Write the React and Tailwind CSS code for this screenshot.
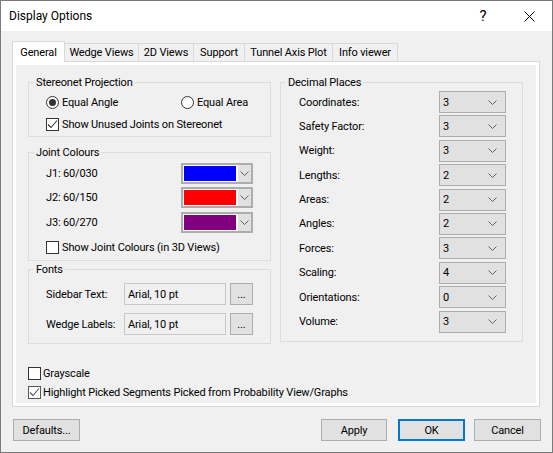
import React from 'react';

function Chevron() {
  return (
    <svg width="9" height="5" viewBox="0 0 9 5" className="block">
      <path d="M0.5 0.5 L4.5 4.5 L8.5 0.5" fill="none" stroke="#606060" strokeWidth="1" />
    </svg>
  );
}

function Check({ checked, dim }) {
  const border = dim ? 'border-[#555]' : 'border-[#333]';
  return (
    <div className={`w-[13px] h-[13px] shrink-0 border ${border} bg-white flex items-center justify-center`}>
      {checked && (
        <svg width="11" height="11" viewBox="0 0 11 11" className="block">
          <path d="M1 5.5 L4 8.5 L10 1.5" fill="none" stroke={dim ? '#555' : '#333'} strokeWidth="1.1" />
        </svg>
      )}
    </div>
  );
}

function Radio({ checked }) {
  return (
    <div className="w-[13px] h-[13px] shrink-0 rounded-full border border-[#333] bg-white flex items-center justify-center">
      {checked && <div className="w-[7px] h-[7px] rounded-full bg-[#333]" />}
    </div>
  );
}

function ColourCombo({ colour }) {
  return (
    <div className="w-[72px] h-[21px] border-2 border-[#adadad] flex">
      <div className="w-[54px] h-full bg-white p-[1px]">
        <div className="w-full h-full" style={{ background: colour }} />
      </div>
      <div className="flex-1 bg-[#e1e1e1] border-l border-white flex items-center justify-center">
        <Chevron />
      </div>
    </div>
  );
}

function Combo({ value }) {
  return (
    <div className="w-[67px] h-[22px] bg-[#e1e1e1] border border-[#adadad] flex items-center justify-between pl-[3px] pr-[8px]">
      <span>{value}</span>
      <Chevron />
    </div>
  );
}

function Button({ children, className = '' }) {
  return (
    <div className={`h-[22px] bg-[#e1e1e1] border border-[#adadad] flex items-center justify-center whitespace-nowrap ${className}`}>
      {children}
    </div>
  );
}

const tabs = [
  { label: 'Wedge Views', w: 'w-[74px]' },
  { label: '2D Views', w: 'w-[55px]' },
  { label: 'Support', w: 'w-[51px]' },
  { label: 'Tunnel Axis Plot', w: 'w-[88px]' },
  { label: 'Info viewer', w: 'w-[65px]' },
];

const decimals = [
  ['Coordinates:', '3'],
  ['Safety Factor:', '3'],
  ['Weight:', '3'],
  ['Lengths:', '2'],
  ['Areas:', '2'],
  ['Angles:', '2'],
  ['Forces:', '3'],
  ['Scaling:', '4'],
  ['Orientations:', '0'],
  ['Volume:', '3'],
];

const joints = [
  ['J1: 60/030', '#0000ff', 'mt-[3px]'],
  ['J2: 60/150', '#ff0000', 'mt-[3px]'],
  ['J3: 60/270', '#800080', 'mt-[4px]'],
];

export default function App() {
  return (
    <div className="w-[553px] h-[453px] bg-[#f0f0f0] border border-[#7a7a7a] flex flex-col text-[11px] leading-[15px] tracking-[-0.15px] text-black font-['Roboto',sans-serif] whitespace-nowrap overflow-hidden">
      {/* title bar */}
      <div className="h-[30px] bg-white flex items-center pl-[8px] shrink-0">
        <span className="text-[12px] tracking-normal">Display Options</span>
        <div className="ml-auto flex h-full">
          <div className="w-[46px] flex items-center justify-center text-[15px]">?</div>
          <div className="w-[46px] flex items-center justify-center">
            <svg width="11" height="11" viewBox="0 0 11 11" className="block">
              <path d="M0.5 0.5 L10.5 10.5 M10.5 0.5 L0.5 10.5" stroke="#000" strokeWidth="1" />
            </svg>
          </div>
        </div>
      </div>

      <div className="flex-1 flex flex-col px-[11px]">
        {/* tab strip */}
        <div className="flex items-end mt-[10px] h-[20px]">
          <div className="relative z-10 -mb-px w-[53px] h-[21px] bg-white border border-b-0 border-[#d9d9d9] flex items-center justify-center">
            General
          </div>
          {tabs.map((t) => (
            <div key={t.label} className={`${t.w} h-[18px] border-t border-r border-[#d9d9d9] flex items-center justify-center`}>
              {t.label}
            </div>
          ))}
        </div>

        {/* tab page */}
        <div className="w-[528px] h-[346px] border border-[#d9d9d9] bg-white p-[3px]">
          <div className="w-full h-full bg-[#f0f0f0] flex flex-col pl-[12px] pt-[10px]">
            <div className="flex gap-[9px] items-start">
              {/* left column */}
              <div className="w-[243px] flex flex-col">
                <fieldset className="h-[62px] border border-[#dcdcdc]">
                  <legend className="ml-[5px] px-[2px]">Stereonet Projection</legend>
                  <div className="pl-[17px] pt-[6px]">
                    <div className="flex items-center h-[13px]">
                      <div className="w-[135px] flex items-center gap-[3px]">
                        <Radio checked />
                        <span>Equal Angle</span>
                      </div>
                      <div className="flex items-center gap-[3px]">
                        <Radio />
                        <span>Equal Area</span>
                      </div>
                    </div>
                    <div className="flex items-center gap-[3px] h-[13px] mt-[9px]">
                      <Check checked />
                      <span>Show Unused Joints on Stereonet</span>
                    </div>
                  </div>
                </fieldset>

                <fieldset className="mt-[8px] h-[116px] border border-[#dcdcdc]">
                  <legend className="ml-[5px] px-[2px]">Joint Colours</legend>
                  <div className="pl-[17px]">
                    {joints.map(([label, colour, mt]) => (
                      <div key={label} className={`flex items-center h-[21px] ${mt}`}>
                        <span className="w-[135px]">{label}</span>
                        <ColourCombo colour={colour} />
                      </div>
                    ))}
                    <div className="flex items-center gap-[3px] h-[13px] mt-[8px]">
                      <Check />
                      <span>Show Joint Colours (in 3D Views)</span>
                    </div>
                  </div>
                </fieldset>

                <fieldset className="mt-[1px] h-[82px] border border-[#dcdcdc]">
                  <legend className="ml-[5px] px-[2px]">Fonts</legend>
                  <div className="pl-[17px] pt-[6px]">
                    <div className="flex items-center h-[22px]">
                      <span className="w-[78px]">Sidebar Text:</span>
                      <div className="w-[102px] h-[22px] border border-[#c8c8c8] bg-[#f0f0f0] flex items-center pl-[3px]">Arial, 10 pt</div>
                      <Button className="w-[23px] ml-[4px]">...</Button>
                    </div>
                    <div className="flex items-center h-[22px] mt-[8px]">
                      <span className="w-[78px]">Wedge Labels:</span>
                      <div className="w-[102px] h-[22px] border border-[#c8c8c8] bg-[#f0f0f0] flex items-center pl-[3px]">Arial, 10 pt</div>
                      <Button className="w-[23px] ml-[4px]">...</Button>
                    </div>
                  </div>
                </fieldset>
              </div>

              {/* right column */}
              <fieldset className="w-[243px] h-[267px] border border-[#dcdcdc]">
                <legend className="ml-[5px] px-[2px]">Decimal Places</legend>
                <div className="pl-[18px] pt-[1px] flex flex-col gap-[2.4px]">
                  {decimals.map(([label, value]) => (
                    <div key={label} className="flex items-center h-[22px]">
                      <span className="w-[140px]">{label}</span>
                      <Combo value={value} />
                    </div>
                  ))}
                </div>
              </fieldset>
            </div>

            <div className="flex items-center gap-[2px] h-[13px] mt-[23px]">
              <Check />
              <span>Grayscale</span>
            </div>
            <div className="flex items-center gap-[2px] h-[13px] mt-[6px]">
              <Check checked dim />
              <span>Highlight Picked Segments Picked from Probability View/Graphs</span>
            </div>
          </div>
        </div>

        {/* dialog buttons */}
        <div className="flex mt-[12px]">
          <Button className="w-[67px] ml-px">Defaults...</Button>
          <Button className="w-[66px] ml-auto">Apply</Button>
          <div className="w-[67px] ml-[11px] h-[22px] bg-[#e1e1e1] border-2 border-[#0078d7] flex items-center justify-center">OK</div>
          <Button className="w-[67px] ml-[9px]">Cancel</Button>
        </div>
      </div>
    </div>
  );
}
